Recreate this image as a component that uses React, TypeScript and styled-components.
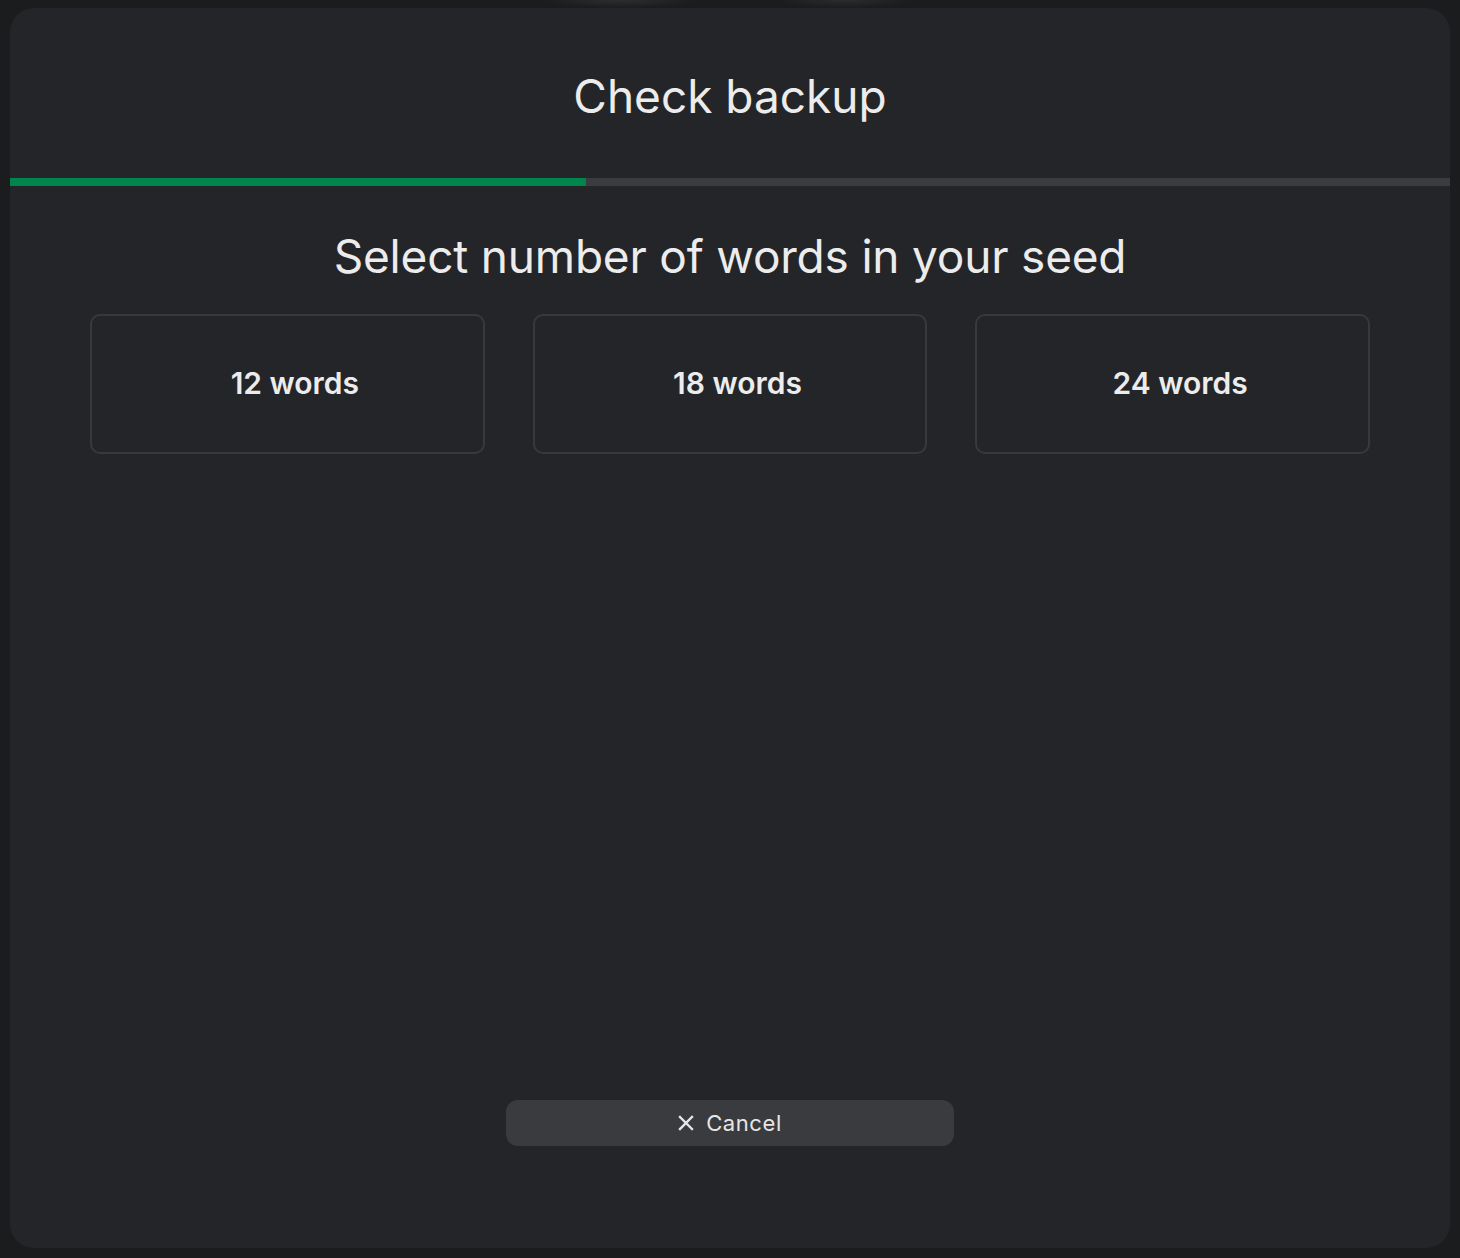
import React from "react";
import styled, { createGlobalStyle } from "styled-components";

const Global = createGlobalStyle`
  html, body { margin: 0; padding: 0; }
  body {
    background: #1b1c1e;
    font-family: Inter, "Noto Sans", sans-serif;
    -webkit-font-smoothing: antialiased;
  }
`;

const Backdrop = styled.div`
  width: 1460px;
  height: 1258px;
  box-sizing: border-box;
  padding: 8px 10px 10px 10px;
  background:
    radial-gradient(ellipse 80px 8px at 620px 0px, rgba(255,255,255,0.08), transparent),
    radial-gradient(ellipse 70px 8px at 845px 0px, rgba(255,255,255,0.07), transparent),
    #1b1c1e;
`;

const Modal = styled.div`
  height: 100%;
  background: #242528;
  border-radius: 24px;
  display: flex;
  flex-direction: column;
  overflow: hidden;
`;

const Header = styled.header`
  height: 170px;
  display: flex;
  align-items: center;
  justify-content: center;
`;

const Title = styled.h1`
  margin: 0;
  font-size: 46px;
  font-weight: 400;
  color: #ececed;
  letter-spacing: 0px;
  padding-top: 6px;
`;

const Track = styled.div`
  height: 8px;
  background: #3b3c3f;
  display: flex;
`;

const Fill = styled.div`
  height: 100%;
  background: #00854d;
`;

const Body = styled.main`
  flex: 1;
  display: flex;
  flex-direction: column;
  align-items: stretch;
  padding: 43px 80px 0;
`;

const Subtitle = styled.h2`
  margin: 0;
  text-align: center;
  font-size: 46px;
  font-weight: 400;
  color: #ececed;
  letter-spacing: -0.2px;
  line-height: 54px;
`;

const Options = styled.div`
  margin-top: 31px;
  display: grid;
  grid-template-columns: repeat(3, 1fr);
  gap: 48px;
`;

const Option = styled.button`
  height: 140px;
  box-sizing: border-box;
  border: 2px solid #38393c;
  border-radius: 10px;
  background: transparent;
  color: #ececed;
  font-family: Inter, "Noto Sans", sans-serif;
  font-size: 30px;
  font-weight: 600;
  letter-spacing: 0px;
  cursor: pointer;
  padding: 0 0 2px 15px;
`;

const Footer = styled.footer`
  display: flex;
  justify-content: center;
  padding-bottom: 102px;
`;

const CancelButton = styled.button`
  width: 448px;
  height: 46px;
  border: none;
  border-radius: 12px;
  background: #3a3b3e;
  color: #e6e6e8;
  font-family: Inter, "Noto Sans", sans-serif;
  font-size: 22px;
  font-weight: 400;
  letter-spacing: 0.6px;
  display: flex;
  align-items: center;
  justify-content: center;
  gap: 12px;
  cursor: pointer;
  padding: 0 0 1px 0;
`;

const XIcon = () => (
  <svg width="16" height="16" viewBox="0 0 16 16" fill="none">
    <path d="M2 2L14 14M14 2L2 14" stroke="#e6e6e8" strokeWidth="2.4" strokeLinecap="square" />
  </svg>
);

export default function App() {
  const progress = 40;
  return (
    <>
      <Global />
      <Backdrop>
        <Modal>
          <Header>
            <Title>Check backup</Title>
          </Header>
          <Track>
            <Fill style={{ width: `${progress}%` }} />
          </Track>
          <Body>
            <Subtitle>Select number of words in your seed</Subtitle>
            <Options>
              <Option>12 words</Option>
              <Option>18 words</Option>
              <Option>24 words</Option>
            </Options>
          </Body>
          <Footer>
            <CancelButton>
              <XIcon />
              Cancel
            </CancelButton>
          </Footer>
        </Modal>
      </Backdrop>
    </>
  );
}
